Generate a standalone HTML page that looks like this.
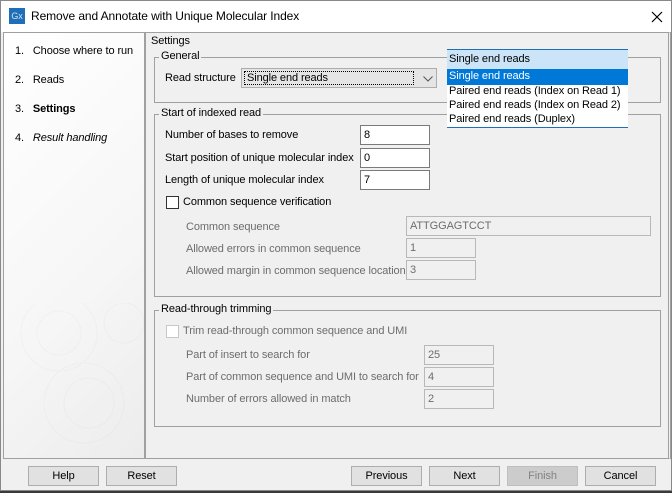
<!DOCTYPE html>
<html><head><style>
*{box-sizing:border-box;margin:0;padding:0}
body{width:672px;height:493px;background:#3a3a3a;font-family:"Liberation Sans",sans-serif;font-size:11px;letter-spacing:-0.1px;color:#000;position:relative;overflow:hidden}
.win{position:absolute;left:0;top:0;width:672px;height:491px;background:#f0f0f0;border:1px solid #888}
.a{position:absolute;white-space:nowrap}
.title{position:absolute;left:0;top:0;width:670px;height:31px;background:#fff}
.panel{position:absolute;border:1px solid #a0a0a0}
.grp{position:absolute;border:1px solid #a0a0a0}
.gl{position:absolute;background:#f0f0f0;padding:0 2px;top:-8px;left:4px}
.in{position:absolute;height:20px;background:#fff;border:1px solid #7a7a7a;padding:3px 0 0 3px}
.dis{background:#f0f0f0;border-color:#b8b8b8;color:#6d6d6d}
.g{color:#6d6d6d}
.btn{position:absolute;top:465px;height:20px;width:71px;background:#e1e1e1;border:1px solid #adadad;text-align:center;line-height:18px}
.cb{position:absolute;width:13px;height:13px;border:1px solid #333;background:#fff}
</style></head><body>
<div class="win">
<div class="title">
<div class="a" style="left:8px;top:7px;width:16px;height:16px;background:#1e6fb8;color:#cfe3f7;font-size:9px;line-height:16px;text-align:center">Gx</div>
<div class="a" style="left:30px;top:8px;font-size:12px">Remove and Annotate with Unique Molecular Index</div>
<svg class="a" style="left:650px;top:10px" width="12" height="12"><path d="M1 1L11 11M11 1L1 11" stroke="#000" stroke-width="1.2"/></svg>
</div>
<div class="panel" style="left:2px;top:31px;width:142px;height:427px;background:linear-gradient(135deg,#fff 0%,#f6f6f6 60%,#ececec 100%)">
<svg class="a" style="left:10px;top:270px" width="130" height="150" opacity="0.12"><g fill="none" stroke="#999" stroke-dasharray="1 1"><circle cx="45" cy="30" r="38"/><circle cx="45" cy="30" r="22"/><circle cx="70" cy="100" r="40"/><circle cx="75" cy="100" r="25"/><circle cx="110" cy="20" r="20"/></g></svg>
<div class="a" style="left:11px;top:12px">1.&nbsp;&nbsp; Choose where to run</div>
<div class="a" style="left:11px;top:41px">2.&nbsp;&nbsp; Reads</div>
<div class="a" style="left:11px;top:70px">3.&nbsp;&nbsp; <b>Settings</b></div>
<div class="a" style="left:11px;top:99px">4.&nbsp;&nbsp; <i>Result handling</i></div>
</div>
<div class="panel" style="left:144px;top:31px;width:526px;height:427px;border-right:3px double #a0a0a0"></div>
<div class="a" style="left:150px;top:34px">Settings</div>
<div class="grp" style="left:153px;top:56px;width:507px;height:46px"><div class="gl">General</div></div>
<div class="a" style="left:164px;top:71px">Read structure</div>
<div class="a" style="left:240px;top:67px;width:196px;height:20px;background:#e5e5e5;border:1px solid #adadad"><div class="a" style="left:2px;top:2px;width:170px;height:14px;border:1px dotted #000;padding-left:2px;line-height:12px">Single end reads</div><svg class="a" style="left:181px;top:7px" width="10" height="6"><path d="M0.5 0.5L5 5L9.5 0.5" stroke="#555" fill="none"/></svg></div>
<div class="grp" style="left:153px;top:113px;width:507px;height:183px"><div class="gl">Start of indexed read</div></div>
<div class="a" style="left:164px;top:128px">Number of bases to remove</div>
<div class="in" style="left:359px;top:124px;width:70px">8</div>
<div class="a" style="left:164px;top:151px">Start position of unique molecular index</div>
<div class="in" style="left:359px;top:147px;width:70px">0</div>
<div class="a" style="left:164px;top:173px">Length of unique molecular index</div>
<div class="in" style="left:359px;top:169px;width:70px">7</div>
<div class="cb" style="left:165px;top:195px"></div>
<div class="a" style="left:182px;top:195px">Common sequence verification</div>
<div class="a g" style="left:185px;top:220px">Common sequence</div>
<div class="in dis" style="left:405px;top:215px;width:245px">ATTGGAGTCCT</div>
<div class="a g" style="left:185px;top:242px">Allowed errors in common sequence</div>
<div class="in dis" style="left:405px;top:237px;width:70px">1</div>
<div class="a g" style="left:185px;top:264px">Allowed margin in common sequence location</div>
<div class="in dis" style="left:405px;top:259px;width:70px">3</div>
<div class="grp" style="left:153px;top:309px;width:507px;height:117px"><div class="gl">Read-through trimming</div></div>
<div class="cb" style="left:165px;top:324px;border-color:#c8c8c8"></div>
<div class="a g" style="left:182px;top:324px">Trim read-through common sequence and UMI</div>
<div class="a g" style="left:185px;top:348px">Part of insert to search for</div>
<div class="in dis" style="left:423px;top:344px;width:70px">25</div>
<div class="a g" style="left:185px;top:370px">Part of common sequence and UMI to search for</div>
<div class="in dis" style="left:423px;top:366px;width:70px">4</div>
<div class="a g" style="left:185px;top:392px">Number of errors allowed in match</div>
<div class="in dis" style="left:423px;top:388px;width:70px">2</div>
<div class="a" style="left:446px;top:48px;width:181px;height:79px;background:#fff;border-top:1px solid #1e6fb8;border-bottom:1px solid #1e6fb8">
<div style="height:19px;background:#cce4f7;padding:3px 0 0 2px">Single end reads</div>
<div style="height:16px;background:#0078d7;color:#fff;padding:1px 0 0 2px">Single end reads</div>
<div style="height:14px;padding-left:2px">Paired end reads (Index on Read 1)</div>
<div style="height:14px;padding-left:2px">Paired end reads (Index on Read 2)</div>
<div style="height:14px;padding-left:2px">Paired end reads (Duplex)</div>
</div>
<div class="btn" style="left:27px">Help</div>
<div class="btn" style="left:105px">Reset</div>
<div class="btn" style="left:350px">Previous</div>
<div class="btn" style="left:428px">Next</div>
<div class="btn" style="left:506px;background:#ccc;border-color:#bfbfbf;color:#838383">Finish</div>
<div class="btn" style="left:584px">Cancel</div>
</div>
</body></html>
